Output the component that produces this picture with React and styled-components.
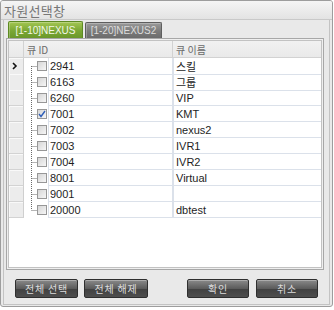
import styled, { createGlobalStyle } from 'styled-components'

const GlobalStyle = createGlobalStyle`
  body {
    margin: 0;
    background: #ffffff;
    font-family: "Liberation Sans", "Noto Sans CJK KR", sans-serif;
  }
`

const rows = [
  { id: '2941', name: '스킬' },
  { id: '6163', name: '그룹' },
  { id: '6260', name: 'VIP' },
  { id: '7001', name: 'KMT', checked: true },
  { id: '7002', name: 'nexus2' },
  { id: '7003', name: 'IVR1' },
  { id: '7004', name: 'IVR2' },
  { id: '8001', name: 'Virtual' },
  { id: '9001', name: '' },
  { id: '20000', name: 'dbtest' },
]

const Window = styled.div`
  box-sizing: border-box;
  width: 333px;
  height: 307px;
  border: 1px solid #9d9d9d;
  border-radius: 3px;
  background: #e9e9e9;
  display: flex;
  flex-direction: column;
  overflow: hidden;
`
const TitleBar = styled.div`
  height: 18px;
  border-bottom: 1px solid #c9c9c9;
  background: linear-gradient(#f5f5f5, #e3e3e3);
  display: flex;
  align-items: center;
  padding-left: 3px;
  font-family: "Noto Sans CJK KR", sans-serif;
  font-size: 13px;
  color: #777777;
  letter-spacing: 0.3px;
`
const Content = styled.div`
  box-sizing: border-box;
  margin: 0 2px 1px 2px;
  height: 285px;
  border: 1px solid #c3c3c3;
  border-top: none;
  display: flex;
  flex-direction: column;
`
const TabRow = styled.div`
  height: 18px;
  display: flex;
  align-items: flex-end;
  gap: 2px;
  padding-left: 4px;
`
const Tab = styled.div`
  box-sizing: border-box;
  width: ${({ $w }) => $w}px;
  height: ${({ $active }) => ($active ? 17 : 16)}px;
  border: 1px solid ${({ $active }) => ($active ? '#5d8a22' : '#5e5e5e')};
  border-bottom: none;
  border-radius: 2px 2px 0 0;
  background: ${({ $active }) =>
    $active
      ? 'linear-gradient(#a3c652, #7aa734 55%, #6b982a)'
      : 'linear-gradient(#9a9a9a, #7b7b7b 55%, #6c6c6c)'};
  color: ${({ $active }) => ($active ? '#f3f7e6' : '#dcdcdc')};
  font-size: 10px;
  display: flex;
  align-items: center;
  justify-content: center;
  box-shadow: inset 1px 1px 0 rgba(255, 255, 255, 0.25);
`
const GridFrame = styled.div`
  box-sizing: border-box;
  margin-left: 2px;
  width: 318px;
  height: 232px;
  border: 1px solid #a7a7a7;
  padding: 1px;
  background: #efefef;
`
const GridInner = styled.div`
  box-sizing: border-box;
  height: 100%;
  border: 1px solid #c2c2c2;
  background: #ffffff;
`
const HeaderRow = styled.div`
  display: grid;
  grid-template-columns: 15px 149px 1fr;
  height: 17px;
  background: linear-gradient(#f1f1f1, #e9e9e9);
  border-bottom: 1px solid #d2d2d2;
  box-sizing: border-box;
`
const HeaderCell = styled.div`
  border-right: 1px solid #d2d2d2;
  font-family: "Noto Sans CJK KR", sans-serif;
  font-size: 10px;
  color: #6a6a6a;
  display: flex;
  align-items: center;
  padding-left: 3px;
  &:last-child {
    border-right: none;
  }
`
const Row = styled.div`
  display: grid;
  grid-template-columns: 15px 149px 1fr;
  height: 16px;
`
const RowHead = styled.div`
  box-sizing: border-box;
  background: #ececec;
  border-right: 1px solid #cfcfcf;
  border-bottom: 1px solid #d3d3d3;
  box-shadow: inset 1px 1px 0 #f9f9f9;
  display: flex;
  align-items: center;
  padding-left: 3px;
`
const IdCell = styled.div`
  display: flex;
  align-items: stretch;
`
const CheckBox = styled.span`
  box-sizing: border-box;
  width: 10px;
  height: 10px;
  margin-top: 3px;
  margin-right: 1px;
  border: 1px solid #979797;
  background: linear-gradient(135deg, #d6d6d6, #f6f6f6);
  display: flex;
  align-items: center;
  justify-content: center;
`
const TextCell = styled.div`
  box-sizing: border-box;
  flex: 1;
  border-left: 1px solid #dbe1ea;
  border-right: ${({ $last }) => ($last ? 'none' : '1px solid #dbe1ea')};
  border-bottom: 1px solid #dbe1ea;
  padding-left: ${({ $pad }) => $pad}px;
  font-family: "Liberation Sans", "Noto Sans CJK KR", sans-serif;
  font-size: 11px;
  color: #1e1e1e;
  display: flex;
  align-items: center;
`
const ButtonBar = styled.div`
  display: flex;
  justify-content: space-between;
  padding: 9px 11px 0 11px;
`
const Group = styled.div`
  display: flex;
  gap: ${({ $gap }) => $gap}px;
`
const Button = styled.button`
  box-sizing: border-box;
  width: ${({ $w }) => $w}px;
  height: 19px;
  padding: 0;
  border: 1px solid #2f2f2f;
  border-radius: 2px;
  background: linear-gradient(#8a8a8a, #5c5c5c 50%, #424242 55%, #4e4e4e);
  box-shadow: inset 0 1px 0 rgba(255, 255, 255, 0.3);
  color: #dcdcdc;
  font-family: "Noto Sans CJK KR", sans-serif;
  font-size: 10px;
  letter-spacing: 0.8px;
`

function Connector({ pos }) {
  const y1 = pos === 'first' ? 8 : 0
  const y2 = pos === 'last' ? 8 : 16
  return (
    <svg width="13" height="16" viewBox="0 0 13 16">
      <line x1="7.5" y1={y1} x2="7.5" y2={y2} stroke="#6a6a6a" strokeDasharray="1 1" />
      <line x1="7.5" y1="8.5" x2="13" y2="8.5" stroke="#6a6a6a" strokeDasharray="1 1" />
    </svg>
  )
}

function Check() {
  return (
    <svg width="8" height="8" viewBox="0 0 8 8">
      <path d="M1 4 L3 6.5 L7 1" fill="none" stroke="#2f5fb8" strokeWidth="1.4" />
    </svg>
  )
}

function Arrow() {
  return (
    <svg width="6" height="8" viewBox="0 0 6 8">
      <path d="M1 1 L4 4 L1 7" fill="none" stroke="#111" strokeWidth="1.6" />
    </svg>
  )
}

export default function App() {
  return (
    <>
      <GlobalStyle />
      <Window>
        <TitleBar>자원선택창</TitleBar>
        <Content>
          <TabRow>
            <Tab $active $w={75}>[1-10]NEXUS</Tab>
            <Tab $w={77}>[1-20]NEXUS2</Tab>
          </TabRow>
          <GridFrame>
            <GridInner>
              <HeaderRow>
                <HeaderCell />
                <HeaderCell>큐 ID</HeaderCell>
                <HeaderCell>큐 이름</HeaderCell>
              </HeaderRow>
              {rows.map((r, i) => (
                <Row key={r.id}>
                  <RowHead>{i === 0 && <Arrow />}</RowHead>
                  <IdCell>
                    <Connector
                      pos={i === 0 ? 'first' : i === rows.length - 1 ? 'last' : 'mid'}
                    />
                    <CheckBox>{r.checked && <Check />}</CheckBox>
                    <TextCell $pad={1}>{r.id}</TextCell>
                  </IdCell>
                  <TextCell $pad={2} $last>{r.name}</TextCell>
                </Row>
              ))}
            </GridInner>
          </GridFrame>
          <ButtonBar>
            <Group $gap={6}>
              <Button $w={63}>전체 선택</Button>
              <Button $w={64}>전체 해제</Button>
            </Group>
            <Group $gap={7}>
              <Button $w={62}>확인</Button>
              <Button $w={62}>취소</Button>
            </Group>
          </ButtonBar>
        </Content>
      </Window>
    </>
  )
}
